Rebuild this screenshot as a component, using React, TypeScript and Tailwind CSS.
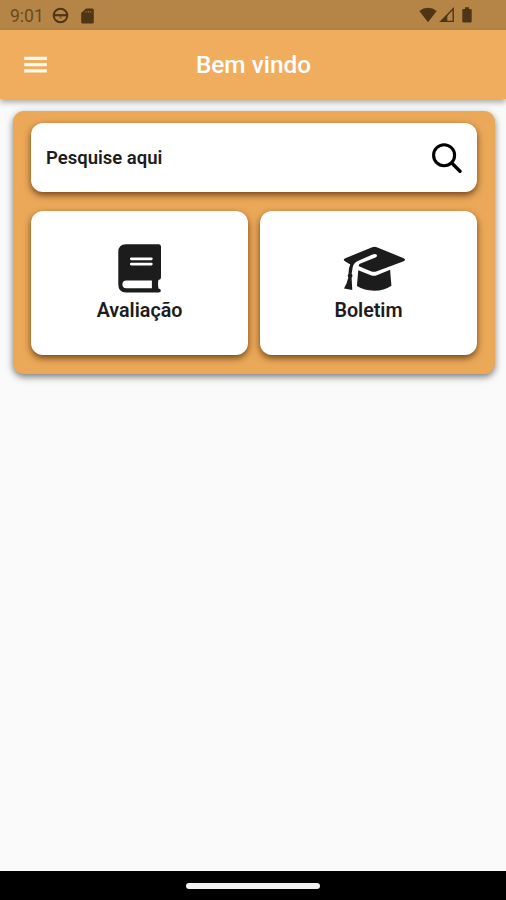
import type { ReactNode } from "react";

const StatusBar = () => (
  <div className="h-[30px] bg-[#b58548] flex items-center text-[#4f3515]">
    <span className="ml-[10px] mt-[3px] w-[35px] text-[17.5px] leading-none text-[#69491f] whitespace-nowrap">9:01</span>
    <svg className="ml-[7px] mt-px" width="17" height="17" viewBox="0 0 17 17" fill="none" stroke="currentColor">
      <circle cx="8.5" cy="8.5" r="6.8" strokeWidth="2" />
      <path d="M2 8.2h13" strokeWidth="2.2" />
      <path d="M8.5 9v2.5" strokeWidth="2" opacity="0.5" />
    </svg>
    <svg className="ml-[12px] mt-px" width="13" height="16" viewBox="0 0 13 16" fill="currentColor">
      <path fillRule="evenodd" d="M5 .5h6.3a1.5 1.5 0 0 1 1.5 1.5v12a1.5 1.5 0 0 1-1.5 1.5H1.7A1.5 1.5 0 0 1 .2 14V5zM4.6 3.2v1.4h1v-1.4zm2.3 0v1.4h1v-1.4zm2.3 0v1.4h1v-1.4z" />
    </svg>
    <div className="ml-auto mr-[34px] flex items-center">
      <svg width="18" height="16" viewBox="0 0 18 16" fill="currentColor">
        <path d="M9 15.2.3 3.9Q4.3.7 9 .7t8.7 3.2z" />
      </svg>
      <svg className="ml-[2px]" width="16" height="16" viewBox="0 0 16 16" fill="none" stroke="currentColor">
        <path d="M1.8 14.4 14.2 1.8v12.6z" strokeWidth="1.4" />
        <path d="M1.2 14.8 8.3 7.6v7.2z" fill="currentColor" stroke="none" />
      </svg>
      <svg className="ml-[7px]" width="10" height="16" viewBox="0 0 10 16" fill="currentColor">
        <path d="M3 .3h4V2h1.5A1.2 1.2 0 0 1 9.7 3.2v11.1a1.2 1.2 0 0 1-1.2 1.2h-7a1.2 1.2 0 0 1-1.2-1.2V3.2A1.2 1.2 0 0 1 1.5 2H3z" />
      </svg>
    </div>
  </div>
);

const Header = () => (
  <header className="z-10 h-[69px] bg-[#f0ad5e] grid grid-cols-[70px_1fr_70px] items-center text-white shadow-[0_3px_6px_rgba(0,0,0,0.35)]">
    <button className="justify-self-center" aria-label="Menu">
      <svg width="23" height="17" viewBox="0 0 23 17" fill="#fffaf0">
        <path d="M.2.8h22.6V4H.2zM.2 7h22.6v3.2H.2zM.2 13.2h22.6v3.2H.2z" />
      </svg>
    </button>
    <h1 className="pt-[2px] pl-px text-center text-[24.4px] leading-none font-medium">Bem vindo</h1>
  </header>
);

const SearchIcon = () => (
  <svg width="30" height="30" viewBox="0 0 30 30" fill="none" stroke="#000" strokeWidth="3.1" strokeLinecap="round">
    <circle cx="12.1" cy="12.2" r="10.5" />
    <path d="m20 20.2 8 8" strokeWidth="3.4" />
  </svg>
);

const BookIcon = () => (
  <svg width="43" height="49" viewBox="0 0 43 49" fill="currentColor">
    <path
      fillRule="evenodd"
      d="M8 .3h32.3A2.6 2.6 0 0 1 43 2.9v30.6q0 2.2-2.6 2.6-.8 4 .1 8.5 2.4.3 2.4 2.1 0 1.8-2.4 1.8H8Q.3 48.500.3 40.500V8Q.3.3 8 .3ZM13.300 13.400a1.300 1.300 0 0 0 0 2.800h20a1.300 1.300 0 0 0 0-2.800ZM13.300 18.700a1.300 1.300 0 0 0 0 2.800h20a1.300 1.300 0 0 0 0-2.800ZM8.300 36.400a3.900 3.900 0 0 0 0 7.800h25.600v-7.800Z"
    />
  </svg>
);

const CapIcon = () => (
  <svg className="ml-[12px]" width="63" height="45" viewBox="20 18 190 134" fill="currentColor">
    <path d="M108 21Q115 18 122 21L203 54Q211 58 203 63L122 93Q113 97 104 93L68 78Q66 74 71 71L118 52Q125 48 121 43Q117 39 109 43L63 63Q51 69 49 83L46 101Q51 106 46 113L48 150L23 145Q33 128 36 112Q32 106 37 101Q36 84 42 73L26 63Q18 58 27 54Z" />
    <path d="M66 90 104 105Q113 108 122 105L162 89 166 137Q144 152 114 152T62 138Z" />
  </svg>
);

const Tile = ({ icon, label }: { icon: ReactNode; label: string }) => (
  <div className="h-[144px] rounded-[12px] bg-white flex flex-col items-center pt-[33px] shadow-[0_3px_7px_rgba(70,35,0,0.75)]">
    <div className="h-[49px] flex items-center">{icon}</div>
    <span className="mt-[6px] text-[19.7px] leading-[24px] font-semibold">{label}</span>
  </div>
);

export default function App() {
  return (
    <div className="h-[900px] w-[506px] flex flex-col overflow-hidden bg-[#fafafa] text-[#1c1c1c] font-['Roboto',sans-serif]">
      <StatusBar />
      <Header />

      <main className="flex-1">
        <section className="mt-[12px] ml-[13px] mr-[11px] h-[263px] rounded-[11px] bg-[#eba858] pt-[12px] px-[18px] shadow-[0_3px_7px_rgba(0,0,0,0.5)]">
          {/* Search */}
          <div className="h-[69px] rounded-[12px] bg-white flex items-center justify-between px-[15px] shadow-[0_3px_7px_rgba(70,35,0,0.75)]">
            <span className="pt-[2px] text-[18.5px] leading-none font-semibold">Pesquise aqui</span>
            <SearchIcon />
          </div>

          {/* Shortcuts */}
          <div className="mt-[19px] grid grid-cols-2 gap-[12px]">
            <Tile icon={<BookIcon />} label="Avaliação" />
            <Tile icon={<CapIcon />} label="Boletim" />
          </div>
        </section>
      </main>

      {/* Gesture bar */}
      <footer className="h-[29px] bg-black flex items-center justify-center">
        <div className="h-[6px] w-[134px] rounded-full bg-[#f2f2f2]" />
      </footer>
    </div>
  );
}
